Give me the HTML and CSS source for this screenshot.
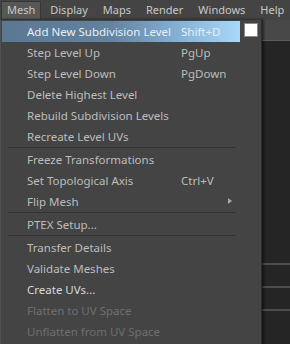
FILE: index.html
```html
<!DOCTYPE html>
<html lang="en">
<head>
  <meta charset="UTF-8" />
  <title>Mesh menu</title>
  <link rel="stylesheet" href="styles.css">
</head>
<body>
  <div class="menubar">
    <span class="top active">Mesh</span>
    <span class="top">Display</span>
    <span class="top">Maps</span>
    <span class="top">Render</span>
    <span class="top">Windows</span>
    <span class="top">Help</span>
  </div>

  <div class="app">
    <div class="toolbar"></div>
    <div class="panel">
      <div class="strip"></div>
      <div class="strip"></div>
      <div class="strip"></div>
    </div>
  </div>

  <div class="dropdown">
    <div class="item hot">
      <span class="label">Add New Subdivision Level</span>
      <span class="key">Shift+D</span>
      <span class="box"></span>
    </div>
    <div class="item"><span class="label">Step Level Up</span><span class="key">PgUp</span></div>
    <div class="item"><span class="label">Step Level Down</span><span class="key">PgDown</span></div>
    <div class="item"><span class="label">Delete Highest Level</span></div>
    <div class="item"><span class="label">Rebuild Subdivision Levels</span></div>
    <div class="item"><span class="label">Recreate Level UVs</span></div>
    <div class="sep"></div>
    <div class="item"><span class="label">Freeze Transformations</span></div>
    <div class="item"><span class="label">Set Topological Axis</span><span class="key">Ctrl+V</span></div>
    <div class="item"><span class="label">Flip Mesh</span><span class="arrow"></span></div>
    <div class="sep"></div>
    <div class="item"><span class="label">PTEX Setup...</span></div>
    <div class="sep"></div>
    <div class="item"><span class="label">Transfer Details</span></div>
    <div class="item"><span class="label">Validate Meshes</span></div>
    <div class="item bright"><span class="label">Create UVs...</span></div>
    <div class="item off"><span class="label">Flatten to UV Space</span></div>
    <div class="item off"><span class="label">Unflatten from UV Space</span></div>
  </div>
</body>
</html>
```

FILE: styles.css
```css
body {
  margin: 0;
  background: #262626;
  font-family: "Noto Sans", "Open Sans", sans-serif;
  font-size: 11.5px;
  color: #bdbdbd;
  height: 344px;
  overflow: hidden;
}

.menubar {
  height: 20px;
  background: #444444;
  display: flex;
  align-items: center;
  padding-left: 1px;
  white-space: nowrap;
  font-size: 11px;
}

.top {
  color: #c8c8c8;
  padding: 0 5px;
  margin-right: 3px;
  height: 17px;
  line-height: 16px;
  border: 1px solid transparent;
}

.top.active {
  background: #575757;
  border-color: #363636;
}

.app {
  display: flex;
  flex-direction: column;
  height: 324px;
}

.toolbar {
  height: 20px;
  background: #484848;
  border-bottom: 1px solid #5e5e5e;
}

.panel {
  flex: 1;
  background: #252525;
  padding-top: 222px;
}

.strip {
  height: 2px;
  background: #4c4c4c;
  margin-bottom: 21px;
}

.dropdown {
  position: absolute;
  left: 0;
  top: 19px;
  width: 258px;
  padding: 1px 1px 4px 1px;
  background: #444444;
  border-left: 1px solid #525252;
  border-top: 1px solid #333;
  border-right: 1px solid #2c2c2c;
  box-shadow: 2px 0 2px rgba(0, 0, 0, 0.45);
}

.item {
  position: relative;
  height: 21px;
  display: flex;
  align-items: center;
  width: 238px;
  white-space: nowrap;
}

.label {
  padding-left: 25px;
  width: 154px;
}

.hot {
  background: linear-gradient(to right, #5b7893 0%, #63829f 45%, #86b2d6 75%, #aad8f8 100%);
  color: #e8eef4;
}

.box {
  position: absolute;
  left: 242px;
  top: 2px;
  width: 12px;
  height: 12px;
  background: #ffffff;
  border: 1px solid #8a8a8a;
}

.arrow {
  position: absolute;
  left: 226px;
  top: 7px;
  width: 0;
  height: 0;
  border-top: 3.5px solid transparent;
  border-bottom: 3.5px solid transparent;
  border-left: 4px solid #a8a8a8;
}

.sep {
  height: 1px;
  margin: 0 0 1px 6px;
  width: 228px;
  background: #333333;
}

.bright {
  color: #dadada;
}

.off {
  color: #6f6f6f;
}
```
